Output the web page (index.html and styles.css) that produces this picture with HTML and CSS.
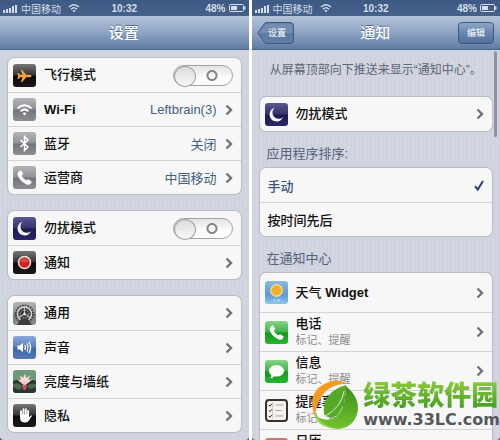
FILE: index.html
```
<!DOCTYPE html>
<html lang="zh-CN">
<head>
  <meta charset="UTF-8">
  <meta name="viewport" content="width=device-width, initial-scale=1.0">
  <title>设置 - 通知</title>
  <link rel="stylesheet" href="styles.css">
</head>
<body>

  <!-- shared shapes -->
  <svg class="defs" width="0" height="0" aria-hidden="true">
    <defs>
      <linearGradient id="gGray" x1="0" y1="0" x2="0" y2="1">
        <stop offset="0" stop-color="#b4b5b8"/><stop offset=".48" stop-color="#8f9194"/>
        <stop offset=".52" stop-color="#737578"/><stop offset="1" stop-color="#8c8e92"/>
      </linearGradient>
      <linearGradient id="gBlack" x1="0" y1="0" x2="0" y2="1">
        <stop offset="0" stop-color="#777"/><stop offset=".48" stop-color="#333"/>
        <stop offset=".52" stop-color="#0c0c0c"/><stop offset="1" stop-color="#1a1a1a"/>
      </linearGradient>
      <linearGradient id="gNight" x1="0" y1="0" x2="0" y2="1">
        <stop offset="0" stop-color="#5a5790"/><stop offset=".48" stop-color="#35336e"/>
        <stop offset=".52" stop-color="#1c1a52"/><stop offset="1" stop-color="#2a2765"/>
      </linearGradient>
      <linearGradient id="gBlue" x1="0" y1="0" x2="0" y2="1">
        <stop offset="0" stop-color="#8ba9d8"/><stop offset=".48" stop-color="#5b80be"/>
        <stop offset=".52" stop-color="#3e65aa"/><stop offset="1" stop-color="#5479b8"/>
      </linearGradient>
      <linearGradient id="gGreen" x1="0" y1="0" x2="0" y2="1">
        <stop offset="0" stop-color="#86d68a"/><stop offset=".48" stop-color="#3fb045"/>
        <stop offset=".52" stop-color="#129a1c"/><stop offset="1" stop-color="#27b52f"/>
      </linearGradient>
      <linearGradient id="gSky" x1="0" y1="0" x2="0" y2="1">
        <stop offset="0" stop-color="#8fb9de"/><stop offset=".6" stop-color="#5b9bd6"/>
        <stop offset="1" stop-color="#8cc6ee"/>
      </linearGradient>
      <linearGradient id="gLeaf" x1="0" y1="0" x2="0" y2="1">
        <stop offset="0" stop-color="#3f8d1e"/><stop offset="1" stop-color="#72c52c"/>
      </linearGradient>
      <symbol id="wifi" viewBox="0 0 12 10">
        <path d="M1 4 Q6 -.6 11 4M3 6.2 Q6 3.4 9 6.2" fill="none" stroke="currentColor" stroke-width="1.5"/>
        <path d="M4.4 7.6 Q6 6.2 7.6 7.6 L6 9.4z" fill="currentColor"/>
      </symbol>
      <symbol id="signal" viewBox="0 0 15 9">
        <path d="M0 6h2v3H0zM3 5h2v4H3zM6 4h2v5H6zM9 2h2v7H9zM12 1h2v8h-2z" fill="currentColor"/>
      </symbol>
      <symbol id="battery" viewBox="0 0 17 8">
        <rect x=".5" y=".5" width="14" height="7" rx="1" fill="none" stroke="currentColor"/>
        <rect x="2" y="2" width="6" height="4" fill="currentColor"/>
        <path d="M15 2.5h1.5v3H15z" fill="currentColor"/>
      </symbol>
      <symbol id="arrow" viewBox="0 0 8 12">
        <path d="M1.5 1.5 L6 6 L1.5 10.5" fill="none" stroke="#707277" stroke-width="2.4"/>
      </symbol>
      <symbol id="moon" viewBox="0 0 23 23">
        <rect width="23" height="23" rx="3" fill="url(#gNight)"/>
        <path d="M9.5 4.8 A7 7 0 1 0 18 14.2 A6.1 6.1 0 0 1 9.5 4.8z" fill="#f4f4fa"/>
      </symbol>
      <symbol id="handset" viewBox="0 0 23 23">
        <path d="M5.2 6.3 L7.3 4.6 Q8 4.3 8.5 5 L10 7.6 Q10.2 8.3 9.6 8.8 L8.7 9.7 Q10.2 12.8 13.3 14.5 L14.5 13.6 Q15.1 13.2 15.7 13.6 L18.2 15.3 Q18.8 15.8 18.4 16.5 L17 18.2 Q15.6 19.2 13.4 18.2 Q7.4 15.6 5 10 Q4.2 7.8 5.2 6.3z" fill="#fff"/>
      </symbol>
    </defs>
  </svg>

  <main class="phones">

    <section class="phone">
      <div class="screen">
        <div class="status">
          <span class="carrier">
            <svg class="signal"><use href="#signal"/></svg>
            中国移动
            <svg class="wifi"><use href="#wifi"/></svg>
          </span>
          <b>10:32</b>
          <span class="power"><b>48%</b><svg class="battery"><use href="#battery"/></svg></span>
        </div>
        <header class="navbar">
          <h1>设置</h1>
        </header>

        <div class="groups">
          <div class="card">
            <label class="row">
              <svg class="icon" viewBox="0 0 23 23">
                <rect width="23" height="23" rx="3" fill="url(#gBlack)"/>
                <path d="M18.6 12 Q18.4 13.2 16.5 13.2 L13.2 13.2 L9.2 18 L7.8 18 L9.6 13.2 L7.2 13.2 L5.6 15 L4.4 15 L5.2 12 L4.4 9 L5.6 9 L7.2 10.8 L9.6 10.8 L7.8 6 L9.2 6 L13.2 10.8 L16.5 10.8 Q18.4 10.8 18.6 12z" fill="#f5a245"/>
              </svg>
              <span class="name">飞行模式</span>
              <input class="switch" type="checkbox">
            </label>
            <a class="row" href="#">
              <svg class="icon" viewBox="0 0 23 23">
                <rect width="23" height="23" rx="3" fill="url(#gGray)"/>
                <path d="M4.5 10.4 Q11.5 4.2 18.5 10.4M7.5 13.4 Q11.5 9.8 15.5 13.4" fill="none" stroke="#fff" stroke-width="1.9"/>
                <path d="M9.5 15.2 Q11.5 13.6 13.5 15.2 L11.5 17.4z" fill="#fff"/>
              </svg>
              <span class="name"><b>Wi-Fi</b></span>
              <span class="value">Leftbrain(3)</span>
              <svg class="arrow"><use href="#arrow"/></svg>
            </a>
            <a class="row" href="#">
              <svg class="icon" viewBox="0 0 23 23">
                <rect width="23" height="23" rx="3" fill="url(#gGray)"/>
                <path d="M7.5 8 L15 15 L11.5 18.4 V4.6 L15 8 L7.5 15" fill="none" stroke="#fff" stroke-width="1.5"/>
              </svg>
              <span class="name">蓝牙</span>
              <span class="value">关闭</span>
              <svg class="arrow"><use href="#arrow"/></svg>
            </a>
            <a class="row" href="#">
              <svg class="icon" viewBox="0 0 23 23">
                <rect width="23" height="23" rx="3" fill="url(#gGray)"/>
                <use href="#handset"/>
              </svg>
              <span class="name">运营商</span>
              <span class="value">中国移动</span>
              <svg class="arrow"><use href="#arrow"/></svg>
            </a>
          </div>

          <div class="card">
            <label class="row">
              <svg class="icon"><use href="#moon"/></svg>
              <span class="name">勿扰模式</span>
              <input class="switch" type="checkbox">
            </label>
            <a class="row" href="#">
              <svg class="icon" viewBox="0 0 23 23">
                <rect width="23" height="23" rx="3" fill="url(#gBlack)"/>
                <circle cx="11.5" cy="11.5" r="6" fill="#cf2323" stroke="#e9e4e4" stroke-width="1.5"/>
                <path d="M7.2 10.5a4.6 4.6 0 0 1 8.6 0q-4.3 1.6-8.6 0z" fill="#d94c48"/>
              </svg>
              <span class="name">通知</span>
              <svg class="arrow"><use href="#arrow"/></svg>
            </a>
          </div>

          <div class="card">
            <a class="row" href="#">
              <svg class="icon" viewBox="0 0 23 23">
                <rect width="23" height="23" rx="3" fill="url(#gGray)"/>
                <circle cx="11.5" cy="12" r="8.6" fill="none" stroke="#3a3a3a" stroke-width="2" stroke-dasharray="1.6 1.1"/>
                <circle cx="11.5" cy="12" r="7" fill="#4a4a4a" stroke="#d6d6d6" stroke-width="1.4"/>
                <circle cx="11.5" cy="12" r="3.8" fill="#2c2c2c" stroke="#a9a9a9" stroke-dasharray="1.2 .8"/>
                <path d="M11.5 12V5.5M11.5 12l-5.6 3.6M11.5 12l5.6 3.6" stroke="#b5b5b5" stroke-width="1.2"/>
                <path d="M4 23 L8 17 H15 L19 23z" fill="#3c3c3c"/>
                <circle cx="11.5" cy="12" r="1.4" fill="#e2e2e2"/>
              </svg>
              <span class="name">通用</span>
              <svg class="arrow"><use href="#arrow"/></svg>
            </a>
            <a class="row" href="#">
              <svg class="icon" viewBox="0 0 23 23">
                <rect width="23" height="23" rx="3" fill="url(#gBlue)"/>
                <path d="M4.5 9.6 H6.8 L10 6.8 V16.2 L6.8 13.4 H4.5z" fill="#fff"/>
                <path d="M11.8 9 Q13.2 11.5 11.8 14M13.8 7.4 Q16.2 11.5 13.8 15.6M15.8 5.8 Q19.4 11.5 15.8 17.2" fill="none" stroke="#fff" stroke-width="1.2"/>
              </svg>
              <span class="name">声音</span>
              <svg class="arrow"><use href="#arrow"/></svg>
            </a>
            <a class="row" href="#">
              <svg class="icon" viewBox="0 0 23 23">
                <rect width="23" height="23" rx="3" fill="#6f9a78"/>
                <path d="M0 11 Q11 6 23 11 V20 a3 3 0 0 1 -3 3 H3 a3 3 0 0 1 -3 -3z" fill="#26392c"/>
                <path d="M0 14 Q6 12 9 16 L7 20 Q3 19 0 17zM23 14 Q17 13 14 16 L17 19 Q21 18 23 17z" fill="#4e6b50"/>
                <path d="M11.5 15 L4 9.5 L8 9.4 L7 5.5 L10.2 8 L11.8 3.8 L13.4 8 L17 5.6 L15.5 9.4 L19.5 9.6z" fill="#f6ded9"/>
                <path d="M11.5 15.6 L6.5 11.5 Q11.5 9.5 17 11.5z" fill="#f3c9c9"/>
                <path d="M8.8 15 H14.2 L12.6 20 H10.4z" fill="#d14a6c"/>
              </svg>
              <span class="name">亮度与墙纸</span>
              <svg class="arrow"><use href="#arrow"/></svg>
            </a>
            <a class="row" href="#">
              <svg class="icon" viewBox="0 0 23 23">
                <rect width="23" height="23" rx="3" fill="url(#gBlack)"/>
                <path d="M8 12.5V7.2M10.4 11V5.2M12.8 11V5.2M15.1 12V7" stroke="#fff" stroke-width="1.9" stroke-linecap="round"/>
                <path d="M7.1 10.5 H16 V13 L17.8 11.4 Q19 11.2 18.8 12.2 L15.4 17.2 Q14 18.8 11.6 18.6 Q7.4 18.4 7.1 14.4z" fill="#fff"/>
              </svg>
              <span class="name">隐私</span>
              <svg class="arrow"><use href="#arrow"/></svg>
            </a>
          </div>
        </div>
      </div>
    </section>

    <section class="phone">
      <div class="screen">
        <div class="status">
          <span class="carrier">
            <svg class="signal"><use href="#signal"/></svg>
            中国移动
            <svg class="wifi"><use href="#wifi"/></svg>
          </span>
          <b>10:32</b>
          <span class="power"><b>48%</b><svg class="battery"><use href="#battery"/></svg></span>
        </div>
        <header class="navbar">
          <button class="back" type="button">
            <svg viewBox="0 0 37 22" preserveAspectRatio="none" aria-hidden="true">
              <path d="M10 .5 H33 Q36.5 .5 36.5 4 V18 Q36.5 21.5 33 21.5 H10 Q8.4 21.5 7.4 20.2 L.8 11 L7.4 1.8 Q8.4 .5 10 .5z" fill="#5f7ca5" stroke="#3f587e"/>
              <path d="M9.5 1.5 H33 Q35.5 1.5 35.5 4 V11 H1.8 L8 2.5z" fill="#728cb2"/>
            </svg>
            <span>设置</span>
          </button>
          <h1>通知</h1>
          <button class="edit" type="button">编辑</button>
        </header>

        <div class="groups notify">
          <p class="hint">从屏幕顶部向下推送来显示“通知中心”。</p>
          <div class="card">
            <a class="row" href="#">
              <svg class="icon"><use href="#moon"/></svg>
              <span class="name">勿扰模式</span>
              <svg class="arrow"><use href="#arrow"/></svg>
            </a>
          </div>

          <h2>应用程序排序:</h2>
          <div class="card">
            <label class="row option">
              <span>手动</span>
              <input type="radio" name="sort" checked>
              <svg class="check" viewBox="0 0 10 11"><path d="M1 6.2 L3.8 9.6 L9 1" fill="none" stroke="#2c4266" stroke-width="2"/></svg>
            </label>
            <label class="row option">
              <span>按时间先后</span>
              <input type="radio" name="sort">
              <svg class="check" viewBox="0 0 10 11"><path d="M1 6.2 L3.8 9.6 L9 1" fill="none" stroke="#2c4266" stroke-width="2"/></svg>
            </label>
          </div>

          <h2>在通知中心</h2>
          <div class="card apps">
            <a class="row" href="#">
              <svg class="icon" viewBox="0 0 23 23">
                <rect width="23" height="23" rx="3" fill="url(#gSky)"/>
                <circle cx="11.5" cy="9.5" r="6.4" fill="#f3d98a"/>
                <circle cx="11.5" cy="9.5" r="5" fill="#f8ac2b"/>
                <path d="M9 18l1 1.5M12 18l1 1.5M15 18l-1 1.5M9 21l1-1M13 21l1-1" stroke="#e8f6ff"/>
              </svg>
              <span class="name">天气 <b>Widget</b></span>
              <svg class="arrow"><use href="#arrow"/></svg>
            </a>
            <a class="row" href="#">
              <svg class="icon" viewBox="0 0 23 23">
                <rect width="23" height="23" rx="3" fill="url(#gGreen)"/>
                <use href="#handset"/>
              </svg>
              <span class="name">电话<small>标记、提醒</small></span>
              <svg class="arrow"><use href="#arrow"/></svg>
            </a>
            <a class="row" href="#">
              <svg class="icon" viewBox="0 0 23 23">
                <rect width="23" height="23" rx="3" fill="url(#gGreen)"/>
                <ellipse cx="11.5" cy="10.8" rx="7.6" ry="5.8" fill="#fff"/>
                <path d="M6.5 14 Q6.8 17 4.8 18.2 Q8.4 18.2 10 15.5z" fill="#fff"/>
              </svg>
              <span class="name">信息<small>标记、提醒</small></span>
              <svg class="arrow"><use href="#arrow"/></svg>
            </a>
            <a class="row" href="#">
              <svg class="icon" viewBox="0 0 23 23">
                <rect x="1" y="1" width="21" height="21" rx="3" fill="#f3f2f0" stroke="#37322f" stroke-width="2"/>
                <path d="M7.5 3v17" stroke="#d9b8b2" stroke-width=".7"/>
                <path d="M4 6l1 1.2 2-2.4M4 11.5l1 1.2 2-2.4M4 17l1 1.2 2-2.4" fill="none" stroke="#333"/>
                <path d="M10.5 6h8M10.5 11.5h6M10.5 17h8" stroke="#a5a5a5"/>
              </svg>
              <span class="name">提醒事项<small>标记、提醒</small></span>
            </a>
            <a class="row" href="#">
              <svg class="icon" viewBox="0 0 23 23">
                <rect width="23" height="23" rx="3" fill="#f1eeee"/>
                <path d="M0 8V3a3 3 0 0 1 3-3h17a3 3 0 0 1 3 3v5z" fill="#c2797c"/>
              </svg>
              <span class="name">日历<small>标记、提醒</small></span>
              <svg class="arrow"><use href="#arrow"/></svg>
            </a>
          </div>
        </div>
        <div class="scrollbar"></div>
      </div>
    </section>

  </main>

  <div class="brand">
    <svg class="brand-logo" viewBox="0 0 48 50">
      <path d="M4 37 Q-5 14 13 4 Q25 -3 36 4 Q23 3 14 12 Q5 22 4 37z" fill="#f79a1e"/>
      <path d="M35 6 Q48 17 47 30 Q44 48 26 49 Q12 48 6 37 Q18 43 26 36 Q35 27 35 6z" fill="url(#gLeaf)"/>
      <path d="M35 5 Q11 12 13 34 Q18 40 25 36 Q35 27 35 5z" fill="#56a827"/>
      <path d="M33 11 Q31 27 13 37" fill="none" stroke="#d9f0c2" stroke-width="1"/>
      <path d="M4 31 Q10 46 25 48 Q10 49 4 37z" fill="#8fd04c"/>
    </svg>
    <div>
      <strong>绿茶软件园</strong>
      <span>www.33LC.com</span>
    </div>
  </div>

</body>
</html>
```
FILE: styles.css
```
* {
  margin: 0;
  padding: 0;
  box-sizing: border-box;
}

body {
  font-family: "Liberation Sans", "Noto Sans CJK SC", sans-serif;
  font-size: 13px;
  background: #fff;
  color: #111;
  height: 100vh;
  overflow: hidden;
  position: relative;
}

svg {
  display: block;
  flex: none;
}

.defs {
  position: absolute;
}

.phones {
  display: flex;
  gap: 3px;
  height: 100%;
}

.phone {
  flex: 1;
  min-width: 0;
  background: #555a63;
}

.screen {
  position: relative;
  height: 100%;
  overflow: hidden;
  border-radius: 0 0 4px 4px;
  background: repeating-linear-gradient(90deg, #d2d6e0 0 2px, #ced3dd 2px 4px);
}

/* Status bar */
.status {
  display: grid;
  grid-template-columns: 1fr auto 1fr;
  align-items: center;
  height: 16px;
  padding: 0 3px;
  font-size: 10px;
  color: #d5deea;
  background: linear-gradient(#3d5a84, #45618a);
}

.carrier,
.power {
  display: flex;
  align-items: center;
  gap: 3px;
}

.power {
  justify-content: flex-end;
}

.signal {
  width: 15px;
  height: 9px;
}

.wifi {
  width: 12px;
  height: 10px;
  margin-left: 4px;
}

.battery {
  width: 17px;
  height: 8px;
}

/* Navigation bar */
.navbar {
  display: grid;
  grid-template-columns: 1fr auto 1fr;
  align-items: center;
  height: 34px;
  padding: 0 6px 0 5px;
  background: linear-gradient(#b4c3d9, #8ea4c3 50%, #5f7aa2);
  border-bottom: 1px solid #4c6489;
}

.navbar h1 {
  grid-column: 2;
  font-size: 15px;
  font-weight: 500;
  line-height: 20px;
  color: #fff;
  text-shadow: 0 -1px 0 #5a6f90;
}

.back,
.edit {
  height: 22px;
  font-family: inherit;
  font-size: 9px;
  line-height: 20px;
  color: #fff;
  cursor: pointer;
}

.back {
  position: relative;
  width: 37px;
  border: none;
  background: none;
  padding-left: 4px;
}

.back svg {
  position: absolute;
  inset: 0;
  width: 100%;
  height: 100%;
}

.back span {
  position: relative;
}

.edit {
  justify-self: end;
  width: 36px;
  border: 1px solid #3f587e;
  border-radius: 4px;
  background: linear-gradient(#8ea4c3, #6a86af 50%, #52709b);
}

/* Grouped lists */
.groups {
  display: flex;
  flex-direction: column;
  gap: 17px;
  padding: 8px 8px 0;
}

.card {
  border-radius: 6px;
  background: #f7f7f7;
  box-shadow: 0 0 0 1px #b9bcc2;
  overflow: hidden;
}

.row {
  display: flex;
  align-items: center;
  height: 34px;
  padding: 0 8px 0 5px;
  color: #111;
  text-decoration: none;
  cursor: pointer;
}

.row + .row {
  border-top: 1px solid #d3d4d6;
}

.icon {
  width: 23px;
  height: 23px;
}

.name {
  flex: 1;
  margin-left: 8px;
  font-weight: 500;
  line-height: 16px;
  white-space: nowrap;
}

.name small {
  display: block;
  font-size: 11px;
  font-weight: normal;
  color: #8c8c8c;
}

.value {
  color: #44607f;
}

.arrow {
  width: 8px;
  height: 12px;
  margin-left: 8px;
}

.switch {
  appearance: none;
  width: 60px;
  height: 21px;
  border: 1px solid #a3a3a5;
  border-radius: 11px;
  background:
    radial-gradient(circle at 38px 50%, transparent 3px, #858587 4px, #858587 5px, transparent 6px),
    linear-gradient(#e4e4e5, #fbfbfb 60%);
  cursor: pointer;
}

.switch::before {
  content: "";
  display: block;
  width: 20px;
  height: 19px;
  border-radius: 50%;
  border: 1px solid #a3a3a5;
  background: linear-gradient(#dcdcdd, #f8f8f8);
}

.switch:checked {
  background: #3f7fe0;
}

.switch:checked::before {
  margin-left: auto;
}

/* Notification screen */
.notify {
  gap: 0;
}

.hint {
  padding: 4px 0 19px;
  font-size: 12px;
  line-height: 16px;
  text-align: center;
  white-space: nowrap;
  color: #5d6675;
}

.notify h2 {
  padding: 14px 7px 5px;
  font-size: 13px;
  font-weight: normal;
  line-height: 18px;
  color: #55607a;
}

.option {
  padding-left: 8px;
  font-weight: 500;
}

.option span {
  flex: 1;
}

.option input {
  appearance: none;
}

.option:has(:checked) {
  color: #3b5478;
}

.check {
  width: 10px;
  height: 11px;
  visibility: hidden;
}

input:checked + .check {
  visibility: visible;
}

.apps .row {
  height: 39px;
}

.scrollbar {
  position: absolute;
  top: 51px;
  right: 3px;
  width: 3px;
  height: 86px;
  border-radius: 2px;
  background: #8d93a1;
}

/* Site mark over the corner */
.brand {
  position: absolute;
  right: 0;
  bottom: 10px;
  display: flex;
  align-items: center;
  gap: 4px;
  white-space: nowrap;
}

.brand-logo {
  width: 48px;
  height: 50px;
}

.brand strong {
  display: block;
  font-size: 27px;
  font-weight: 900;
  line-height: 30px;
  color: transparent;
  background: linear-gradient(#8ccb3a, #3f9a22);
  background-clip: text;
}

.brand span {
  display: block;
  font-family: "DejaVu Sans", sans-serif;
  font-size: 16px;
  font-weight: bold;
  line-height: 18px;
  color: #55585a;
}
```
